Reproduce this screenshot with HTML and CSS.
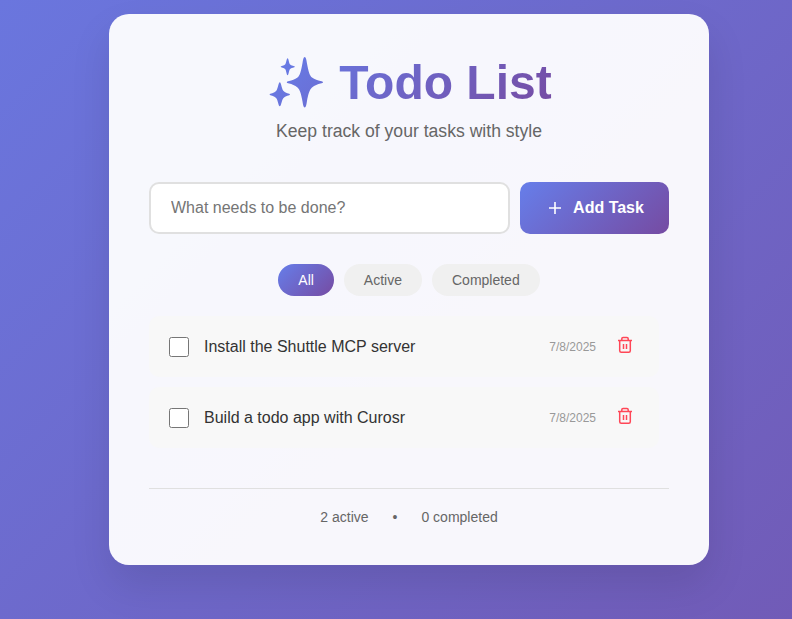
FILE: index.html
```html
<!DOCTYPE html>
<html lang="en">
<head>
<meta charset="utf-8">
<title>Todo List</title>
<link rel="stylesheet" href="styles.css">
</head>
<body>
<main class="card">
  <header class="header">
    <h1 class="title">
      <svg class="sparkles" viewBox="0 0 60 56" aria-hidden="true">
        <defs><linearGradient id="g" gradientUnits="userSpaceOnUse" x1="0" y1="0" x2="170" y2="170"><stop offset="0" stop-color="#667eea"/><stop offset="1" stop-color="#764ba2"/></linearGradient></defs>
        <g fill="url(#g)">
          <path d="M38.700 3C40 3 40.300 5.500 40.900 9C42.300 17 43.500 21.500 46 23.500C48.500 25.500 52 26.300 54.500 27C56.200 27.500 57 27.700 57 28.300C57 28.900 56.200 29.100 54.500 29.600C52 30.300 48.500 31.300 46 33.500C43.500 35.700 42.300 40 40.900 47.500C40.300 51 40 53.500 38.700 53.500C37.400 53.500 37.100 51 36.500 47.500C35.100 40 34 35.700 31.500 33.500C29 31.300 25.700 30.300 23.200 29.600C21.500 29.100 20.800 28.900 20.800 28.300C20.800 27.700 21.500 27.500 23.200 27C25.700 26.300 29 25.500 31.500 23.500C34 21.500 35.100 17 36.500 9C37.100 5.500 37.400 3 38.700 3Z"/>
          <path d="M21.600 4.300C22.700 4.300 22.700 8.500 23.900 10.300C25.100 11.900 28.900 12 28.900 12.800C28.900 13.600 25.100 13.700 23.900 15.300C22.700 17.100 22.700 21.200 21.600 21.200C20.500 21.200 20.500 17.100 19.300 15.300C18.100 13.700 14.700 13.600 14.700 12.800C14.700 12 18.100 11.900 19.300 10.300C20.500 8.500 20.500 4.300 21.600 4.300Z"/>
          <path d="M13.800 28.200C15.100 28.200 15.500 34.200 17.300 36.700C19.100 39.200 24 39.400 24 40.400C24 41.400 19.100 41.700 17.300 44.200C15.500 46.700 15.100 52.300 13.800 52.300C12.500 52.300 12.100 46.700 10.300 44.200C8.500 41.700 3.600 41.400 3.600 40.400C3.600 39.400 8.500 39.200 10.300 36.700C12.100 34.200 12.500 28.200 13.800 28.200Z"/>
        </g>
      </svg>
      <span class="title-text">Todo List</span>
    </h1>
    <p class="subtitle">Keep track of your tasks with style</p>
  </header>

  <form class="add-form">
    <input class="task-input" type="text" placeholder="What needs to be done?">
    <button class="add-button" type="button">
      <svg class="plus" viewBox="0 0 14 14" aria-hidden="true"><path d="M7 1v12M1 7h12"/></svg>
      <span>Add Task</span>
    </button>
  </form>

  <nav class="filters">
    <button class="filter filter-active" type="button">All</button>
    <button class="filter" type="button">Active</button>
    <button class="filter" type="button">Completed</button>
  </nav>

  <ul class="list">
    <li class="item">
      <input class="check" type="checkbox">
      <span class="text">Install the Shuttle MCP server</span>
      <span class="date">7/8/2025</span>
      <button class="delete" type="button" aria-label="Delete">
        <svg class="trash" viewBox="0 0 16 18"><path d="M1 4.500h14M2.700 4.500V14.800q0 1.500 1.500 1.500h7.600q1.500 0 1.500-1.500V4.500M4.800 4V2.700q0-1.300 1.300-1.300h3.800q1.300 0 1.300 1.300V4M6.500 8v5M9.500 8v5"/></svg>
      </button>
    </li>
    <li class="item">
      <input class="check" type="checkbox">
      <span class="text">Build a todo app with Curosr</span>
      <span class="date">7/8/2025</span>
      <button class="delete" type="button" aria-label="Delete">
        <svg class="trash" viewBox="0 0 16 18"><path d="M1 4.500h14M2.700 4.500V14.800q0 1.500 1.500 1.500h7.600q1.500 0 1.500-1.500V4.500M4.800 4V2.700q0-1.300 1.300-1.300h3.800q1.300 0 1.300 1.300V4M6.500 8v5M9.500 8v5"/></svg>
      </button>
    </li>
  </ul>

  <footer class="stats">
    <span>2 active</span><span>•</span><span>0 completed</span>
  </footer>
</main>
</body>
</html>
```
FILE: styles.css
```css
* {
  margin: 0;
  padding: 0;
  box-sizing: border-box;
}

body {
  height: 619px;
  padding: 14px 0 0 109px;
  overflow: hidden;
  font-family: "Liberation Sans", Arial, sans-serif;
  background: linear-gradient(135deg, #6a76de 0%, #715bb7 100%);
}

button,
input {
  font-family: inherit;
}

.card {
  width: 600px;
  height: 551px;
  padding: 40px;
  border-radius: 20px;
  background: rgba(255, 255, 255, 0.95);
  box-shadow: 0 20px 40px rgba(0, 0, 0, 0.1);
}

.header {
  height: 128px;
  text-align: center;
}

.title {
  display: flex;
  justify-content: center;
  gap: 13px;
  height: 55px;
  font-size: 48px;
  line-height: 57px;
}

.sparkles {
  width: 60px;
  height: 56px;
}

.title-text {
  color: transparent;
  background: linear-gradient(135deg, #667eea 0%, #764ba2 100%);
  background-position: right;
  background-size: 286px 57px;
  background-clip: text;
  -webkit-background-clip: text;
}

.subtitle {
  margin-top: 12px;
  font-size: 17.6px;
  line-height: 20px;
  color: #666;
}

.add-form {
  display: flex;
  gap: 10px;
  height: 52px;
}

.task-input {
  flex: 1;
  min-width: 0;
  padding: 0 20px;
  border: 2px solid #e0e0e0;
  border-radius: 10px;
  background: #fff;
  font-size: 16px;
}

.add-button {
  display: flex;
  align-items: center;
  justify-content: center;
  gap: 11px;
  width: 149px;
  padding-left: 3px;
  border: 0;
  border-radius: 10px;
  color: #fff;
  font-size: 16px;
  font-weight: 600;
  background: linear-gradient(135deg, #667eea 0%, #764ba2 100%);
}

.plus {
  width: 14px;
  height: 14px;
  fill: none;
  stroke: #fff;
  stroke-width: 1.6;
}

.filters {
  display: flex;
  justify-content: center;
  gap: 10px;
  margin-top: 30px;
}

.filter {
  height: 32px;
  padding: 0 20px;
  border: 0;
  border-radius: 20px;
  color: #666;
  font-size: 14px;
  background: #f0f0f0;
}

.filter-active {
  color: #fff;
  background: linear-gradient(135deg, #667eea 0%, #764ba2 100%);
}

.list {
  display: flex;
  flex-direction: column;
  gap: 10px;
  margin-top: 20px;
  padding-right: 10px;
  list-style: none;
}

.item {
  display: flex;
  align-items: center;
  height: 61px;
  padding: 0 20px;
  border-radius: 10px;
  background: #f8f8f8;
}

.check {
  width: 20px;
  height: 20px;
  margin-right: 15px;
}

.text {
  flex: 1;
  font-size: 16px;
  color: #333;
}

.date {
  margin-right: 15px;
  font-size: 12px;
  color: #999;
}

.delete {
  display: flex;
  align-items: center;
  justify-content: center;
  width: 28px;
  padding-bottom: 4px;
  border: 0;
  background: none;
}

.trash {
  width: 16px;
  height: 18px;
  fill: none;
  stroke: #ff4757;
  stroke-width: 1.5;
}

.stats {
  display: flex;
  justify-content: center;
  gap: 24px;
  margin-top: 40px;
  padding-top: 20px;
  border-top: 1px solid #e0e0e0;
  font-size: 14px;
  line-height: 17px;
  color: #666;
}
```
